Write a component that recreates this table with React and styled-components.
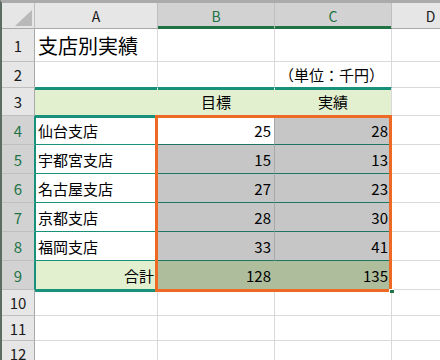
import React from "react";
import styled, { createGlobalStyle } from "styled-components";

const GRID = "#d9d9d9";
const GRID_SEL = "#a8a8a8";
const TEAL = "#17917a";
const TEAL_SEL = "#1f7462";
const LIGHT = "#e2f0d0";
const OLIVE = "#aebd9c";
const SEL = "#c6c6c6";
const HEAD = "#e6e6e6";
const HEAD_SEL = "#d2d2d2";
const HEAD_LINE = "#bfbfbf";
const XL_GREEN = "#217346";
const ORANGE = "#ee6a24";

const GlobalStyle = createGlobalStyle`
  html, body {
    margin: 0;
    padding: 0;
    background: #fff;
    overflow: hidden;
  }
  body {
    font-family: "Noto Sans CJK JP", "Noto Sans", sans-serif;
  }
`;

const Window = styled.div`
  width: 440px;
  height: 360px;
  box-sizing: border-box;
  border-top: 3px solid #ababab;
  border-left: 2px solid #5b6d62;
  overflow: hidden;
`;

const Sheet = styled.div`
  display: grid;
  grid-template-columns: 33px 123px 117px 117px 78px;
  grid-template-rows: 26px 33px 26px 28px repeat(6, 29px) 26px 25px 25px;
`;

const Corner = styled.div`
  grid-row: 1;
  grid-column: 1;
  background: ${HEAD};
  border-right: 1px solid ${HEAD_LINE};
  border-bottom: 1px solid #a9a9a9;
  box-sizing: border-box;
  display: flex;
  align-items: flex-end;
  justify-content: flex-end;
  padding: 0 2px 2px 0;

  svg {
    display: block;
  }
`;

const ColHeader = styled.div`
  grid-row: 1;
  grid-column: ${(p) => p.$c};
  box-sizing: border-box;
  display: flex;
  align-items: center;
  justify-content: center;
  font-size: 14px;
  background: ${(p) => (p.$selected ? HEAD_SEL : HEAD)};
  color: ${(p) => (p.$selected ? XL_GREEN : "#1b1b1b")};
  border-right: 1px solid ${HEAD_LINE};
  border-bottom: 1px solid ${(p) => (p.$selected ? XL_GREEN : "#a9a9a9")};
  box-shadow: ${(p) => (p.$selected ? `inset 0 -2px 0 ${XL_GREEN}` : "none")};
`;

const RowHeader = styled.div`
  grid-row: ${(p) => p.$r};
  grid-column: 1;
  box-sizing: border-box;
  display: flex;
  align-items: center;
  justify-content: center;
  font-size: 15px;
  background: ${(p) => (p.$selected ? HEAD_SEL : HEAD)};
  color: ${(p) => (p.$selected ? XL_GREEN : "#1b1b1b")};
  border-right: 1px solid ${(p) => (p.$selected ? TEAL : "#a9a9a9")};
  border-bottom: 1px solid ${HEAD_LINE};
`;

const Cell = styled.div`
  grid-row: ${(p) => p.$r};
  grid-column: ${(p) => p.$c};
  box-sizing: border-box;
  display: flex;
  align-items: center;
  justify-content: ${(p) =>
    p.$align === "right" ? "flex-end" : p.$align === "center" ? "center" : "flex-start"};
  padding: 0 ${(p) => p.$pad ?? 3}px 0 3px;
  font-size: ${(p) => p.$size || 15}px;
  color: #000;
  white-space: nowrap;
  background: ${(p) => p.$bg || "#fff"};
  border-right: 1px solid ${(p) => p.$br || GRID};
  border-bottom: 1px solid ${(p) => p.$bb || GRID};
  box-shadow: ${(p) => p.$edge || "none"};
`;

const Selection = styled.div`
  grid-row: 5 / 11;
  grid-column: 3 / 5;
  margin: -1px 0 -2px -3px;
  border: 3px solid ${ORANGE};
  position: relative;
  z-index: 2;
  pointer-events: none;
`;

const FillHandle = styled.div`
  position: absolute;
  right: -5px;
  bottom: -4px;
  width: 5px;
  height: 4px;
  box-sizing: border-box;
  background: ${XL_GREEN};
  border-left: 1px solid #fff;
  border-top: 1px solid #fff;
`;

const branches = [
  ["仙台支店", 25, 28],
  ["宇都宮支店", 15, 13],
  ["名古屋支店", 27, 23],
  ["京都支店", 28, 30],
  ["福岡支店", 33, 41],
];

const band = `inset 0 2px 0 ${TEAL}`;

const rows = [
  { n: 1, cells: [{ text: "支店別実績", size: 20, pad: 3 }, {}, {}] },
  {
    n: 2,
    cells: [
      { bb: TEAL },
      { bb: TEAL },
      { text: "（単位：千円）", align: "right", bb: TEAL, pad: 7 },
    ],
  },
  {
    n: 3,
    cells: [
      { bg: LIGHT, br: LIGHT, bb: TEAL, edge: band },
      { text: "目標", align: "center", bg: LIGHT, br: LIGHT, bb: TEAL, edge: band },
      { text: "実績", align: "center", bg: LIGHT, bb: TEAL, edge: band },
    ],
  },
  ...branches.map(([name, goal, result], i) => ({
    n: 4 + i,
    selected: true,
    cells: [
      { text: name, bb: TEAL, edge: `inset 1px ${i === 0 ? 2 : 0}px 0 ${TEAL}` },
      {
        text: goal,
        align: "right",
        bg: i === 0 ? "#fff" : SEL,
        br: GRID_SEL,
        bb: TEAL_SEL,
      },
      { text: result, align: "right", bg: SEL, br: GRID_SEL, bb: TEAL_SEL },
    ],
  })),
  {
    n: 9,
    selected: true,
    cells: [
      { text: "合計", align: "right", bg: LIGHT, br: LIGHT, bb: TEAL, edge: `inset 1px 0 0 ${TEAL}` },
      { text: 128, align: "right", bg: OLIVE, br: OLIVE, bb: TEAL },
      { text: 135, align: "right", bg: OLIVE, bb: TEAL },
    ],
  },
  { n: 10, cells: [{ edge: band }, {}, {}] },
  { n: 11, cells: [{}, {}, {}] },
  { n: 12, cells: [{}, {}, {}] },
];

const columns = ["A", "B", "C", "D"];

export default function App() {
  return (
    <>
      <GlobalStyle />
      <Window>
        <Sheet>
          <Corner>
            <svg width="17" height="16" viewBox="0 0 17 16">
              <polygon points="17,0 17,16 0,16" fill="#b9b9b9" />
            </svg>
          </Corner>
          {columns.map((c, i) => (
            <ColHeader key={c} $c={i + 2} $selected={c === "B" || c === "C"}>
              {c}
            </ColHeader>
          ))}
          {rows.map((row) => (
            <React.Fragment key={row.n}>
              <RowHeader $r={row.n + 1} $selected={row.selected}>
                {row.n}
              </RowHeader>
              {[...row.cells, {}].map((cell, ci) => (
                <Cell
                  key={ci}
                  $r={row.n + 1}
                  $c={ci + 2}
                  $align={cell.align}
                  $size={cell.size}
                  $pad={cell.pad}
                  $bg={cell.bg}
                  $br={cell.br}
                  $bb={cell.bb}
                  $edge={cell.edge}
                >
                  {cell.text}
                </Cell>
              ))}
            </React.Fragment>
          ))}
          <Selection>
            <FillHandle />
          </Selection>
        </Sheet>
      </Window>
    </>
  );
}
